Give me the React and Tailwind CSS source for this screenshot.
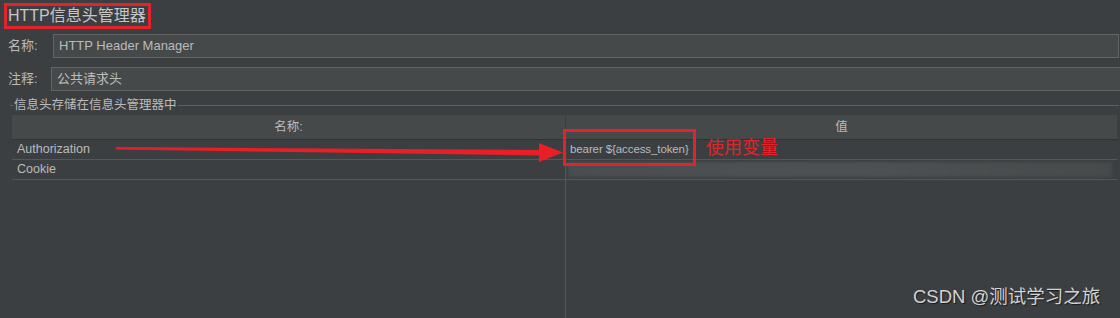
const Field = ({ label, value, labelW, right }) => (
  <div className="flex items-stretch h-[24px]">
    <div className="shrink-0 pl-[8px] flex items-center text-[13px] text-[#bbbbbb]" style={{ width: labelW }}>
      {label}
    </div>
    <div
      className={`flex-1 flex items-center pl-[5px] bg-[#45494a] border border-[#646464] text-[13px] text-[#bbbbbb] ${right ? "mr-[1px]" : "border-r-0"}`}
    >
      {value}
    </div>
  </div>
);

const Row = ({ name, children }) => (
  <div className="flex h-[20px] border-b border-[#555759]">
    <div className="w-[553px] pl-[5px] flex items-center text-[12.5px] text-[#bbbbbb]">{name}</div>
    <div className="flex-1 border-l border-[#555759] flex items-center">{children}</div>
  </div>
);

export default function App() {
  return (
    <div
      className="w-[1120px] h-[318px] bg-[#3c3f41] relative overflow-hidden flex flex-col pt-[3px]"
      style={{ fontFamily: '"Liberation Sans", "Noto Sans CJK SC", sans-serif' }}
    >
      {/* title */}
      <div className="ml-[4px] w-[147px] h-[26px] border-[3px] border-[#e3232a] flex items-center pl-[1px] text-[16px] text-[#c6c6c6] leading-none whitespace-nowrap">
        HTTP信息头管理器
      </div>

      <div className="mt-[5px]">
        <Field label="名称:" value="HTTP Header Manager" labelW={53} right />
      </div>
      <div className="mt-[9px]">
        <Field label="注释:" value="公共请求头" labelW={51} />
      </div>

      {/* group title */}
      <div className="mt-[7px] h-[14px] flex items-center pl-[10px] pr-[1px]">
        <div className="w-[3px] h-px bg-[#5e6061]" />
        <span className="px-[1px] text-[12.5px] text-[#bbbbbb] leading-none">信息头存储在信息头管理器中</span>
        <div className="flex-1 h-px bg-[#5e6061]" />
      </div>

      {/* table */}
      <div className="mt-[3px] ml-[12px] w-[1105px] flex-1 flex flex-col">
        <div className="flex h-[25px] bg-[#45494a] border-b border-[#323232] text-[12.5px] text-[#bbbbbb]">
          <div className="w-[553px] flex items-center justify-center">名称:</div>
          <div className="flex-1 border-l border-[#3c3f41] flex items-center justify-center">值</div>
        </div>
        <Row name="Authorization">
          <span className="pl-[4px] text-[11.5px] tracking-[-0.1px] text-[#bbbbbb] whitespace-nowrap">bearer ${"{"}access_token{"}"}</span>
        </Row>
        <Row name="Cookie">
          <div className="ml-[2px] mr-[5px] h-[15px] flex-1 bg-gradient-to-r from-[#4a4d4f] via-[#4e5153] to-[#464a4b] blur-[1.5px]" />
        </Row>
        <div className="flex-1 flex">
          <div className="w-[553px]" />
          <div className="flex-1 border-l border-[#555759]" />
        </div>
      </div>

      {/* annotations */}
      <svg className="absolute left-0 top-0 pointer-events-none" width="1120" height="318">
        <polygon points="116,147 116,149.5 542,155.5 542,150" fill="#e91e26" />
        <polygon points="539,143 563,152.5 539,162" fill="#e91e26" />
      </svg>
      <div className="absolute left-[563px] top-[129px] w-[133px] h-[37px] border-[3px] border-[#e3232a]" />
      <div className="absolute left-[706px] top-[139px] text-[18px] text-[#e3232a] leading-none">使用变量</div>

      <div
        className="absolute left-[913px] top-[288px] text-[18.5px] text-[#d2d2d2] leading-none whitespace-nowrap"
        style={{ textShadow: "1px 1px 1px rgba(0,0,0,0.6)" }}
      >
        CSDN @测试学习之旅
      </div>
    </div>
  );
}
